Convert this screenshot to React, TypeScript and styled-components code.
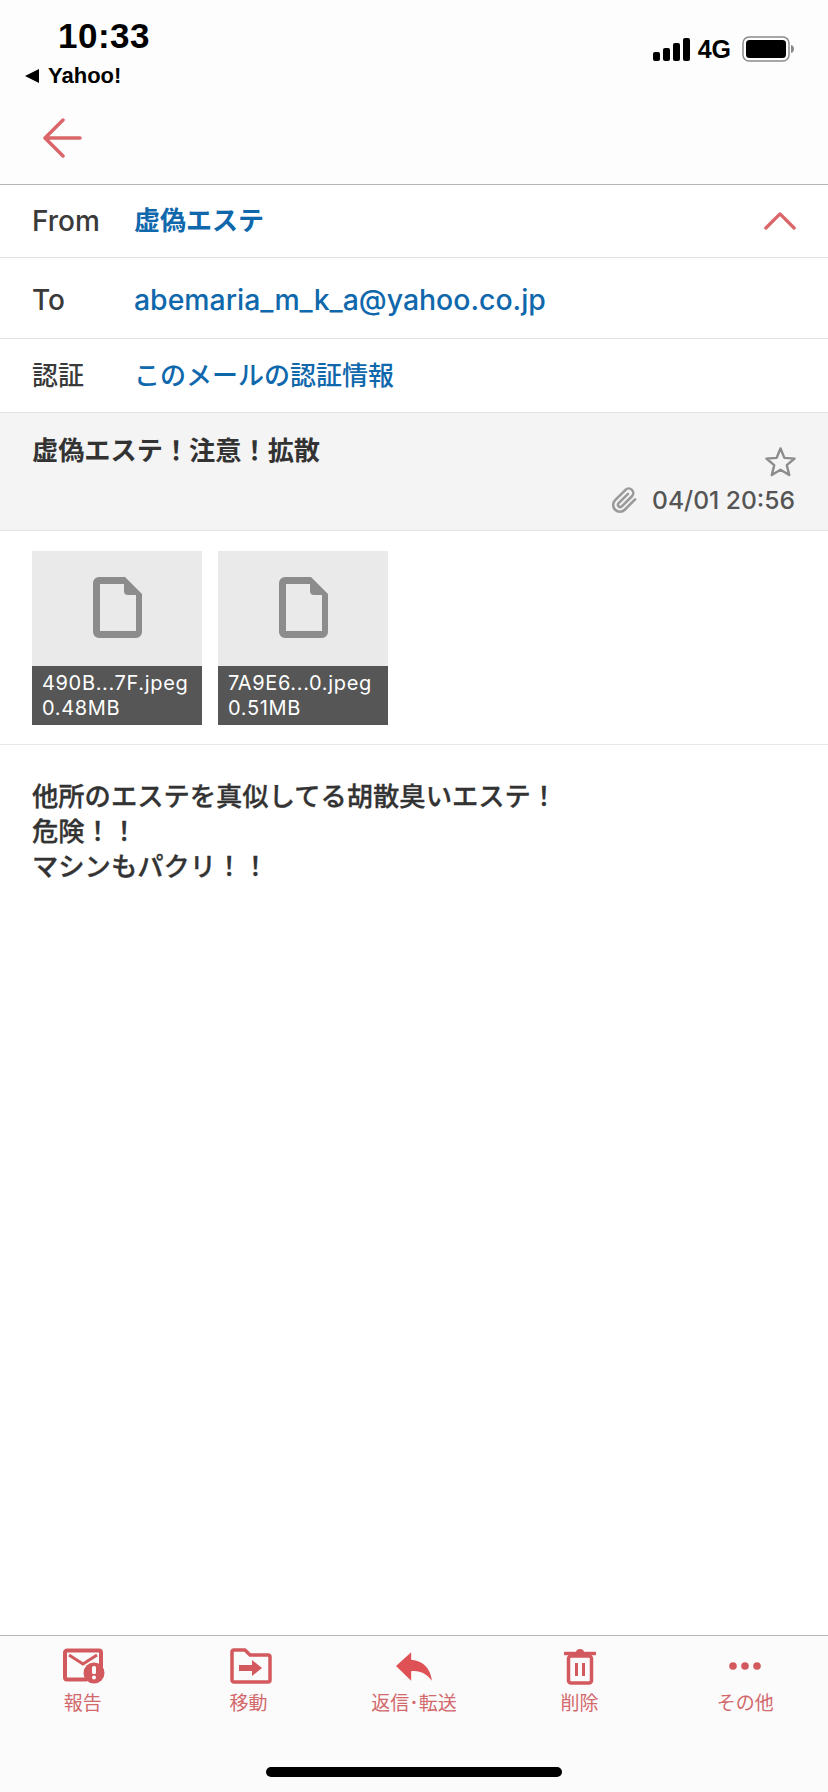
import React from "react";
import styled, { createGlobalStyle } from "styled-components";

const Global = createGlobalStyle`
  html, body { margin: 0; padding: 0; background: #fff; }
  * { box-sizing: border-box; }
`;
const FONT = `"Inter", "Liberation Sans", "Noto Sans CJK JP", sans-serif`;
const CJK = `"Noto Sans CJK JP", "Inter", sans-serif`;

const Page = styled.div`
  width: 828px; height: 1792px; display: flex; flex-direction: column;
  background: #fff; font-family: ${FONT}; overflow: hidden;
`;
const TopBar = styled.header`
  height: 185px; background: #fdfdfd; border-bottom: 1px solid #b4b4b4;
  display: flex; flex-direction: column; flex: none;
`;
const StatusBar = styled.div`
  height: 94px; display: flex; justify-content: space-between; padding: 17px 33px 0 25px;
`;
const StatusLeft = styled.div`display: flex; flex-direction: column;`;
const Clock = styled.div`
  font: 700 35px/38px "Liberation Sans", sans-serif; color: #000; padding-left: 33px; letter-spacing: .5px;
`;
const BackApp = styled.div`
  display: flex; align-items: center; gap: 9px; margin-top: 8px;
  font: 700 22px/25px "Liberation Sans", sans-serif; color: #000;
`;
const BackTriangle = styled.span`
  width: 0; height: 0; border-style: solid; border-width: 7px 14px 7px 0;
  border-color: transparent #000 transparent transparent;
`;
const StatusRight = styled.div`display: flex; align-items: center; gap: 8px; height: 34px; margin-top: 15px;`;
const Network = styled.span`font: 700 25px/1 "Liberation Sans", sans-serif; color: #000; margin-right: 3px;`;
const BackRow = styled.div`padding: 24px 0 0 42px;`;
const Row = styled.div<{ $h: number; $top?: number }>`
  height: ${p => p.$h}px; flex: none; display: flex; align-items: center; padding: ${p => p.$top ?? 0}px 32px 0;
  border-bottom: 1px solid #e2e2e2; position: relative;
`;
const RowLabel = styled.span<{ $size: number }>`
  width: 102px; flex: none; font: 500 ${p => p.$size}px/32px "Inter", ${CJK}; color: #3a3a3a;
`;
const RowValue = styled.span<{ $size: number; $weight: number }>`
  font: ${p => p.$weight} ${p => p.$size}px/32px "Inter", ${CJK}; color: #0f68ac; white-space: nowrap;
`;
const Chevron = styled.svg`position: absolute; right: 32px; top: 26px;`;
const Subject = styled.section`
  height: 118px; flex: none; background: #f4f4f4; border-bottom: 1px solid #e2e2e2; position: relative;
  padding: 18px 32px 0;
`;
const SubjectTitle = styled.div`font: 700 26.2px/36px ${CJK}; color: #333;`;
const StarIcon = styled.svg`position: absolute; right: 32px; top: 33px;`;
const Meta = styled.div`
  position: absolute; right: 33px; top: 72px; display: flex; align-items: center; gap: 14px;
  font: 500 24.6px/30px ${FONT}; color: #555;
`;
const Attachments = styled.section`
  height: 214px; flex: none; border-bottom: 1px solid #e8e8e8; padding: 20px 32px 0;
  display: flex; gap: 16px; align-items: flex-start;
`;
const Card = styled.div`width: 170px; height: 174px; display: flex; flex-direction: column;`;
const Thumb = styled.div`
  height: 115px; background: #eaeaea; display: flex; justify-content: center; padding-top: 26px;
`;
const Caption = styled.div`
  height: 59px; background: #565656; color: #fff; padding: 5px 10px 0;
  font: 400 20px/24.5px ${FONT}; letter-spacing: .65px; white-space: nowrap;
`;
const Body = styled.div`
  flex: 1; padding: 32px 32px 0; font: 500 26.3px/35px ${CJK}; color: #333;
  -webkit-text-stroke: .3px #333;
`;
const BottomBar = styled.footer`
  height: 157px; flex: none; background: #fcfbfc; border-top: 1px solid #b8b8b8; position: relative;
  display: grid; grid-template-columns: repeat(5, 1fr);
`;
const Tab = styled.div`
  display: flex; flex-direction: column; align-items: center; padding-top: 11px;
`;
const TabIcon = styled.div<{ $shift?: number }>`
  height: 38px; display: flex; align-items: center; justify-content: center;
  margin-left: ${p => p.$shift ?? 0}px;
`;
const TabLabel = styled.span`
  margin-top: 4px; font: 400 19px/26px ${CJK}; color: #d2696c; white-space: nowrap;
`;
const HomeBar = styled.div`
  position: absolute; left: 50%; margin-left: -148px; bottom: 15px; width: 296px; height: 10px;
  background: #000; border-radius: 5px;
`;

const red = "#d25a5e";
const Doc = () => (
  <svg width="49" height="61" viewBox="0 0 49 61">
    <path
      fillRule="evenodd"
      fill="#8c8c8c"
      d="M6 0H32L49 17V55a6 6 0 0 1-6 6H6a6 6 0 0 1-6-6V6a6 6 0 0 1 6-6ZM7 7V54H43V18H35a4 4 0 0 1-4-4V7Z"
    />
  </svg>
);

export default function App() {
  return (
    <Page>
      <Global />
      <TopBar>
        <StatusBar>
          <StatusLeft>
            <Clock>10:33</Clock>
            <BackApp><BackTriangle />Yahoo!</BackApp>
          </StatusLeft>
          <StatusRight>
            <svg width="37" height="23" viewBox="0 0 37 23" fill="#000">
              <rect x="0" y="14" width="7" height="9" rx="2" />
              <rect x="10" y="10" width="7" height="13" rx="2" />
              <rect x="20" y="5" width="7" height="18" rx="2" />
              <rect x="30" y="0" width="7" height="23" rx="2" />
            </svg>
            <Network>4G</Network>
            <svg width="53" height="26" viewBox="0 0 53 26">
              <rect x="1" y="1" width="46" height="24" rx="6" fill="none" stroke="#8a8a8a" strokeWidth="1.5" />
              <rect x="4" y="4" width="40" height="18" rx="3.5" fill="#000" />
              <path d="M49 9c2 .5 3 2 3 4s-1 3.5-3 4Z" fill="#8a8a8a" />
            </svg>
          </StatusRight>
        </StatusBar>
        <BackRow>
          <svg width="40" height="40" viewBox="0 0 40 40" fill="none" stroke="#d9676a" strokeWidth="3.5" strokeLinecap="round" strokeLinejoin="round">
            <path d="M21 2 3 20l18 18M3 20h35" />
          </svg>
        </BackRow>
      </TopBar>
      <Row $h={73}>
        <RowLabel $size={28}>From</RowLabel>
        <RowValue $size={26} $weight={700}>虚偽エステ</RowValue>
        <Chevron width="32" height="19" viewBox="0 0 34 20" fill="none" stroke="#d9676a" strokeWidth="3.5" strokeLinecap="round" strokeLinejoin="round"><path d="M2 18 17 3l15 15" /></Chevron>
      </Row>
      <Row $h={81} $top={4}>
        <RowLabel $size={28}>To</RowLabel>
        <RowValue $size={28.4} $weight={500}>abemaria_m_k_a@yahoo.co.jp</RowValue>
      </Row>
      <Row $h={74}>
        <RowLabel $size={26}>認証</RowLabel>
        <RowValue $size={26} $weight={500}>このメールの認証情報</RowValue>
      </Row>
      <Subject>
        <SubjectTitle>虚偽エステ！注意！拡散</SubjectTitle>
        <StarIcon width="31" height="31" viewBox="0 0 32 32" fill="none" stroke="#8c8c8c" strokeWidth="2.5" strokeLinejoin="round">
          <path d="M16 2.5 20 12.3 30.5 13 22.5 19.8 25 30 16 24.5 7 30 9.5 19.8 1.5 13 12 12.3Z" />
        </StarIcon>
        <Meta>
          <svg width="27" height="27" viewBox="0 0 24 24" fill="none" stroke="#9a9a9a" strokeWidth="2.3" strokeLinecap="round" strokeLinejoin="round">
            <path d="m21.4 11-9.2 9.2a6 6 0 0 1-8.5-8.5l9.2-9.2a4 4 0 0 1 5.7 5.7l-9.2 9.2a2 2 0 0 1-2.8-2.8l8.5-8.5" />
          </svg>
          <span>04/01 20:56</span>
        </Meta>
      </Subject>
      <Attachments>
        <Card><Thumb><Doc /></Thumb><Caption>490B...7F.jpeg<br />0.48MB</Caption></Card>
        <Card><Thumb><Doc /></Thumb><Caption>7A9E6...0.jpeg<br />0.51MB</Caption></Card>
      </Attachments>
      <Body>
        他所のエステを真似してる胡散臭いエステ！<br />危険！！<br />マシンもパクリ！！
      </Body>
      <BottomBar>
        <Tab>
          <TabIcon $shift={2}>
            <svg width="42" height="36" viewBox="0 0 42 36">
              <path d="M4 2.5H36a2 2 0 0 1 2 2V20M24 31.5H4a2 2 0 0 1-2-2V4.5a2 2 0 0 1 2-2" fill="none" stroke={red} strokeWidth="4" />
              <path d="M6 7l14 9 14-9" fill="none" stroke={red} strokeWidth="3" />
              <circle cx="31" cy="25" r="10.5" fill={red} />
              <rect x="29" y="18" width="4" height="8" rx="1.5" fill="#fff" />
              <circle cx="31" cy="29.5" r="2" fill="#fff" />
            </svg>
          </TabIcon>
          <TabLabel>報告</TabLabel>
        </Tab>
        <Tab>
          <TabIcon $shift={5}>
            <svg width="42" height="36" viewBox="0 0 42 36">
              <path d="M4 2h11l5 5h18a2 2 0 0 1 2 2v23a2 2 0 0 1-2 2H4a2 2 0 0 1-2-2V4a2 2 0 0 1 2-2Z" fill="none" stroke={red} strokeWidth="3.5" strokeLinejoin="round" />
              <path d="M9 17h13v-5l10 8-10 8v-5H9Z" fill={red} />
            </svg>
          </TabIcon>
          <TabLabel>移動</TabLabel>
        </Tab>
        <Tab>
          <TabIcon>
            <svg width="36" height="29" viewBox="0 0 38 30">
              <path d="M16 0 0 14.5 16 30V20C26 19 32 23 38 30 36 17 29 9 16 8Z" fill="#de5256" />
            </svg>
          </TabIcon>
          <TabLabel>返信･転送</TabLabel>
        </Tab>
        <Tab>
          <TabIcon>
            <svg width="32" height="38" viewBox="0 0 32 38">
              <path d="M1 6.5H31" stroke={red} strokeWidth="3.5" strokeLinecap="round" />
              <path d="M12 5.5a4 3.5 0 0 1 8 0Z" fill={red} />
              <rect x="4.5" y="9" width="23" height="27" rx="2.5" fill="none" stroke={red} strokeWidth="3.5" />
              <path d="M12.5 16v13M19.5 16v13" stroke={red} strokeWidth="3" />
            </svg>
          </TabIcon>
          <TabLabel>削除</TabLabel>
        </Tab>
        <Tab>
          <TabIcon>
            <svg width="34" height="10" viewBox="0 0 34 10" fill={red}>
              <circle cx="5" cy="5" r="3.8" /><circle cx="17" cy="5" r="3.8" /><circle cx="29" cy="5" r="3.8" />
            </svg>
          </TabIcon>
          <TabLabel>その他</TabLabel>
        </Tab>
        <HomeBar />
      </BottomBar>
    </Page>
  );
}
